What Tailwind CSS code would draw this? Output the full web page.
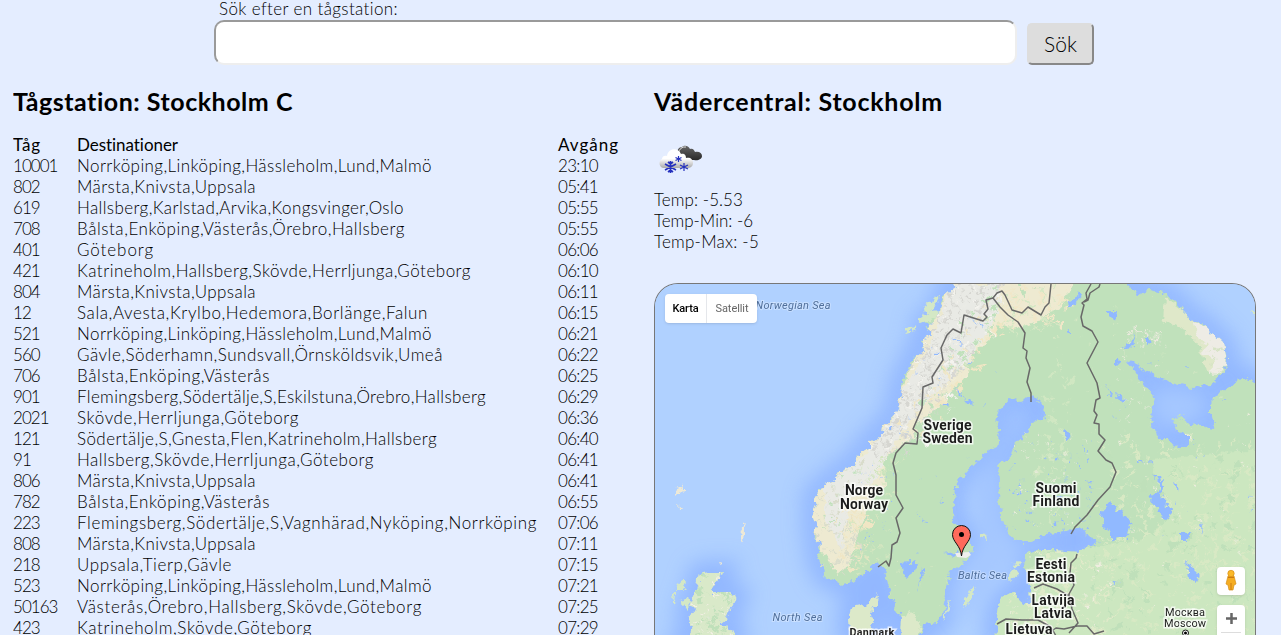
<!DOCTYPE html>
<html lang="sv">
<head>
<meta charset="utf-8">
<title>Tågstation</title>
<script src="https://cdn.jsdelivr.net/npm/@tailwindcss/browser@4"></script>
</head>
<body class="h-[635px] overflow-hidden bg-[#e4edff] font-['Century_Gothic','Lato',sans-serif] text-[17px] font-light leading-[21px] text-black">
<form class="ml-[214px] flex h-[65px] flex-col">
  <label class="h-5 pl-[5px] leading-[17px]"><span data-w="179">Sök efter en tågstation:</span></label>
  <div class="flex gap-[10px]">
    <input class="h-[45px] w-[803px] rounded-[10px] border-2 border-t-[#9a9a9a] border-l-[#9a9a9a] border-r-[#eee] border-b-[#eee] bg-white px-3 text-xl">
    <button type="button" class="mt-[3px] h-[42px] w-[67px] rounded-[5px] border-2 border-t-[#ddd] border-l-[#ddd] border-r-[#888] border-b-[#888] bg-[#ddd] pb-0.5 text-[21px]"><span data-w="33">Sök</span></button>
  </div>
</form>
<main class="flex pl-[13px]">
  <section class="h-[570px] w-[641px] shrink-0 overflow-hidden">
    <h2 class="mt-[22px] h-[30px] text-[25px] font-bold leading-[29px]"><span data-w="280">Tågstation: Stockholm C</span></h2>
    <div class="mt-[17px] grid grid-cols-[64px_481px_80px] auto-rows-[21px] whitespace-nowrap" id="trains">
      <b><span data-w="28">Tåg</span></b><b><span data-w="101">Destinationer</span></b><b><span data-w="61">Avgång</span></b>
    </div>
  </section>
  <section class="w-[602px] shrink-0">
    <h2 class="mt-[22px] h-[30px] text-[25px] font-bold leading-[29px]"><span data-w="289">Vädercentral: Stockholm</span></h2>
    <svg class="mt-[18px] block" width="50" height="50" viewBox="0 0 50 50">
      <defs><linearGradient id="cl" x2="0" y2="1"><stop offset=".5" stop-color="#fff"/><stop offset="1" stop-color="#aaa"/></linearGradient>
      <linearGradient id="dk" x2="0" y2="1"><stop stop-color="#666"/><stop offset="1" stop-color="#292929"/></linearGradient></defs>
      <path d="M25 19c-3-4 0-7 3-7 2-2 6-2 8 2 3-1 4 1 5 3 4-1 7 1 7 4s-4 5-8 4H30z" fill="url(#dk)"/>
      <path d="M24 19q2-8 8-7" fill="none" stroke="#ddd"/>
      <path d="M10 33c-5 0-6-7-2-9 0-3 3-4 5-3 1-8 11-9 14-2 4-1 5 2 5 4 4-1 7 1 7 5 0 4-3 5-6 5z" fill="url(#cl)"/>
      <g stroke="#2530bd"><path stroke-width="1.700" d="M16.500 26v12M11 29l11 6M11 35l11-6M14 27l2.500 2 2.500-2M14 37l2.500-2 2.500 2"/><path stroke-width="1.200" d="M24.500 21v6M21.500 22.500l6 3M21.500 25.500l6-3M30 28v8M26 30l8 4M26 34l8-4"/></g>
    </svg>
    <div class="mt-[4px]"><p><span data-w="89">Temp: -5.53</span></p><p><span data-w="99">Temp-Min: -6</span></p><p><span data-w="105">Temp-Max: -5</span></p></div>
    <div class="relative mt-[31px] h-[352px] w-[602px] overflow-hidden rounded-t-[24px] border border-b-0 border-[#777] bg-[#b0d1ff]">
      <svg class="block" width="600" height="351" viewBox="655 284 600 351" font-family="Roboto, sans-serif">
        <defs>
          <filter id="soft" x="-20%" y="-20%" width="140%" height="140%"><feGaussianBlur stdDeviation="10"/></filter>
          <filter id="rough" filterUnits="userSpaceOnUse" x="640" y="270" width="640" height="380"><feTurbulence type="fractalNoise" baseFrequency=".16" numOctaves="3" seed="4"/><feDisplacementMap in="SourceGraphic" scale="9" xChannelSelector="R" yChannelSelector="G"/></filter>
          <path id="scan" d="M953 280L956 288 942 298 940 312 925 322 931 334 921 341 924 350 913 357 908 370 901 382 904 391 897 400 900 410 892 419 883 426 882 437 870 440 869 449 858 455 853 466 837 473 835 482 820 488 814 498 817 508 813 516 817 526 814 535 820 545 817 558 823 566 824 575 842 584 853 582 864 574 877 562 885 570 888 585 895 605 902 618 901 640H920L922 624 938 623 943 615 947 588 950 572 960 565 970 556 973 547 971 538 962 527 952 522 953 502 957 483 967 472 978 460 988 451 997 447 1000 430 995 421 999 410 1010 398 1020 401 1033 395 1045 407 1043 420 1032 423 1024 436 1014 445 1010 459 998 464 1000 482 998 498 1002 518 1009 535 1023 543 1037 539 1050 533 1066 531 1080 527 1087 535 1100 543 1088 546 1077 552 1052 550 1037 550 1025 556 1024 568 1030 577 1031 604 1024 604 1017 597 1014 591 1003 597 998 606 996 618 997 640H1260V384L1252 381 1240 376 1235 384 1218 394 1210 402 1210 413 1217 424 1210 429 1200 425 1190 424 1182 415 1173 420 1177 430 1188 435 1188 447 1177 447 1168 439 1160 439 1153 426 1151 411 1154 396 1144 385 1136 372 1125 360 1134 361 1140 367 1153 375 1163 380 1180 385 1193 388 1209 384 1218 377 1226 366 1227 358 1223 343 1212 333 1200 322 1190 319 1183 310 1174 300 1163 293 1149 290 1138 296 1127 285V280Z"/>
          <path id="uk" d="M700 574L710 572 722 572 718 580 711 592 730 592 737 596 733 604 727 618 720 624 734 632 735 642H683L692 628 688 616 694 612 690 604 696 590Z"/>
          <path id="dane" d="M849 616Q852 600 866 606L877 592 876 606 870 615 874 622 867 637H850ZM902 617L911 612 921 623 918 640H901Z"/>
          <clipPath id="land"><use href="#scan"/></clipPath><clipPath id="ukc"><use href="#uk"/></clipPath>
        </defs>
        <path d="M655 284h600v351H655z" fill="#b0d1ff"/>
        <g fill="none" stroke="#86adff" stroke-width="24" opacity=".7" filter="url(#soft)"><use href="#scan"/><use href="#uk"/><use href="#dane"/></g>
        <path d="M977 480L1010 425 1030 410 1000 462 999 505 1010 543 1060 540 1020 555 990 590 965 620 955 600 966 560 985 545ZM1150 390L1205 395 1200 420 1160 430Z" fill="#a6c8ff" filter="url(#soft)"/>
        <g filter="url(#rough)">
        <use href="#scan" fill="#c0e1bb"/>
        <g clip-path="url(#land)">
          <path d="M1060 550L1140 540 1170 520 1150 460 1260 450V640H990V590Z" fill="#cce7c0"/>
          <path d="M953 280H1075L1062 306 1035 322 1018 328 1000 325 990 340 975 352 968 375 948 397 935 410 922 420 918 435 902 445 882 460 885 485 872 500 858 535 850 565 838 575 818 545 808 500 858 455 895 405 925 335Z" fill="#eeead1"/>
          <path d="M952 284H1000L1000 310 985 335 970 360 950 380 931 397 917 412 905 430 893 445 874 480 850 500 842 550 825 520 825 485 865 455 893 420 903 390 928 350Z" fill="#e9eae5"/>
          <path d="M1165 297L1183 310 1212 333 1227 358 1213 375 1207 372 1201 350 1185 330 1163 320Z" fill="#dfe8c9"/>
          <path d="M1192 320L1210 330 1224 343 1227 363 1217 375 1209 374 1215 362 1202 352 1208 345 1198 340Z" fill="#eeece5"/>
          <g id="specks"></g>
          <g fill="#91b9ff">
            <path d="M1100 513L1110 502 1118 510 1128 517 1131 527 1127 537 1118 537 1113 542 1107 531ZM1152 475L1161 478 1164 488 1160 493 1166 505 1172 508 1169 519 1161 518 1159 510 1150 500 1153 494 1158 492 1161 484ZM1181 533h8l-1 7h-7zM1186 561l7 7 7 7-4 8-7-6zM1110 580l7 2-4 2zM1199 523l3 4-1 6zM1175 483l4 2-1 6zM1137 460l7 1-5 3zM1068 302l7-4 3-6 4 1-5 10-8 5zM1106 312h10l-2 8zM1115 357l5 5-5 5zM1106 386l7 6-1 5zM1117 393l9 8-7 1zM1063 430l10 6-7 3zM1133 333l1 13-15 2 12-5zM1147 335l5 7-5 3zM1069 330l5 5-8-3z"/>
            <path d="M901 562l8-1 0 5 8-7-2 11-11 8zM922 569l3-1-2 10-5 11zM922 519l6 4-2 1zM969 318l12 6 4 4zM953 339l12 6-6-1zM955 387l10 10-5-1zM965 397l8 8-6-1zM941 401l10 6-8-2zM944 554l15-3-5 5zM975 350l8 10zM957 378l5 6zM948 495l4 2z"/>
          </g>
        </g>
        <use href="#uk" fill="#d9e9c9"/><g clip-path="url(#ukc)" id="ukspecks"></g><use href="#dane" fill="#dce9c9"/>
        <g fill="#eee9d6"><path d="M674 489l8-2 1-3v6l-6 6zM678 504l3 4-2 0zM741 530l4-7 2-1-3 8-1 12-3-7zM720 561l4 4-3 2zM728 632l6-2z"/><path fill="#d4e8c5" d="M677 592l4-10 5-3-1 8-5 5zM672 593l3 0-1 13-1-2zM680 600l8-2 2 8-4 4zM964 601l8-14 3-1-6 16-5 5zM943 621l5-18 3-3-4 15zM1007 577l7-8 6 4-9 8zM1011 563l9-2-3 6zM980 534l6 1 1 4-7-2zM917 319l14-8 9-1-7 9-11 4zM924 307l8-4 4-9 4 2-7 14-8 4zM903 334l5-5 7-4-5 8zM1250 311l5 1v5z"/></g>
        </g>
        <g fill="none" stroke="#686868" stroke-width="1.500" stroke-linejoin="round">
          <path d="M878 567L886 561 889 566 891 558 892 545 897 542 900 533 896 518 903 508 896 495 896 475 893 463 896 453 905 443 917 444 918 433 913 429 922 408 923 387 933 383 932 377 943 360 941 348 947 335 953 329 961 333 964 315 983 321 987 317 984 314 988 309 986 300 993 298 1000 307 1008 315 1018 322 1025 333 1023 348 1027 351 1026 358 1030 368 1027 382 1031 393 1031 402"/>
          <path d="M993 298L997 293 1002 291 1005 295 1012 310 1022 313 1028 307 1041 315 1045 307 1049 303 1051 284M1091 284L1086 293 1087 299 1082 303 1084 305 1081 317 1083 326 1092 331 1098 342 1087 363 1097 383 1100 398 1096 400 1094 411 1097 415 1094 423 1099 424 1099 434 1105 440 1098 451 1106 460 1112 463 1116 472 1110 487 1098 500 1087 515 1075 527 1071 534M1100 284L1099 287 1090 293 1088 300 1084 302"/>
          <path d="M1077 554l-1 4-5 5-1 10 4 12-5 9 3 15 6 14-9 10M1034 588l9-4 14 5 12 7M997 624l9-5 16 1 16 0 13 7 5 9M1050 632l6-4 8 1 13-3 10 0 7 8 10-3"/>
        </g>
        <g text-anchor="middle" font-size="14" font-weight="700" fill="#1d1d1d" stroke="#fff" stroke-opacity=".75" stroke-width="3" paint-order="stroke" lengthAdjust="spacingAndGlyphs">
          <text x="947.500" y="430" textLength="48">Sverige</text><text x="947.500" y="443" textLength="50">Sweden</text>
          <text x="864" y="495" textLength="38">Norge</text><text x="864" y="509" textLength="48">Norway</text>
          <text x="1056" y="493" textLength="41">Suomi</text><text x="1056" y="506" textLength="47">Finland</text>
          <text x="1051" y="569" textLength="31">Eesti</text><text x="1051" y="582" textLength="48">Estonia</text>
          <text x="1053" y="605" textLength="43">Latvija</text><text x="1053" y="618" textLength="38">Latvia</text>
          <text x="1029" y="634" textLength="47">Lietuva</text><text x="872" y="636" font-size="11" textLength="45">Danmark</text>
          <g font-weight="400" font-size="11"><text x="1185" y="616" textLength="40">Москва</text><text x="1185" y="627" textLength="42">Moscow</text></g>
          <g font-weight="400" font-style="italic" font-size="11" fill="#506f9b" stroke-opacity=".3" stroke-width="2"><text x="793" y="309" textLength="75">Norwegian Sea</text><text x="982.500" y="579" textLength="49">Baltic Sea</text><text x="797.500" y="621" textLength="50">North Sea</text></g>
        </g>
        <circle cx="1185.500" cy="633" r="3" fill="#fff" stroke="#111"/><circle cx="1185.500" cy="633" r="1.500"/>
        <path d="M955 553l14-1 2 3-5 3-9-1z" fill="#eee"/>
        <path d="M961.500 556c-1-11-9-14-9-21.500a9 9 0 0 1 18 0c0 7.500-8 10.500-9 21.500z" fill="#ff6a5c" stroke="#111"/><circle cx="961.500" cy="534.500" r="2.500"/>
      </svg>
      <div class="absolute left-[10px] top-[10px] flex h-[29px] w-[92px] rounded-sm bg-white font-[Roboto] text-[11px] leading-[29px] shadow-sm"><div class="w-[42px] border-r border-gray-200 text-center font-medium"><span data-w="26">Karta</span></div><div class="flex-1 text-center font-normal text-[#666]"><span data-w="33">Satellit</span></div></div>
      <div class="absolute left-[562px] top-[283px] h-7 w-7 rounded-sm bg-white shadow-sm"><svg width="28" height="28"><path d="M11 9l-2 8 2 1 1 5h4l1-5 2-1-2-8z" fill="#f5ad22" stroke="#d68e16" stroke-width=".7"/><circle cx="14" cy="6.500" r="3.200" fill="#fbb929" stroke="#d68e16" stroke-width=".7"/><path d="M14 16v7M11 10.500h6" stroke="#cc7a10"/></svg></div>
      <div class="absolute left-[562px] top-[321px] h-[30px] w-7 rounded-t-sm bg-white shadow-sm"><svg width="28" height="30"><path d="M9 13.500h11M14.500 8v11" stroke="#666" stroke-width="2.500"/><path d="M4 27.500h20" stroke="#ddd"/></svg></div>
    </div>
  </section>
</main>
<script>
const rows = [
["10001","Norrköping,Linköping,Hässleholm,Lund,Malmö","23:10",355],["802","Märsta,Knivsta,Uppsala","05:41",179],["619","Hallsberg,Karlstad,Arvika,Kongsvinger,Oslo","05:55",327],["708","Bålsta,Enköping,Västerås,Örebro,Hallsberg","05:55",328],["401","Göteborg","06:06",77],["421","Katrineholm,Hallsberg,Skövde,Herrljunga,Göteborg","06:10",394],["804","Märsta,Knivsta,Uppsala","06:11",179],["12","Sala,Avesta,Krylbo,Hedemora,Borlänge,Falun","06:15",351],["521","Norrköping,Linköping,Hässleholm,Lund,Malmö","06:21",355],["560","Gävle,Söderhamn,Sundsvall,Örnsköldsvik,Umeå","06:22",366],["706","Bålsta,Enköping,Västerås","06:25",193],["901","Flemingsberg,Södertälje,S,Eskilstuna,Örebro,Hallsberg","06:29",409],["2021","Skövde,Herrljunga,Göteborg","06:36",222],["121","Södertälje,S,Gnesta,Flen,Katrineholm,Hallsberg","06:40",360],["91","Hallsberg,Skövde,Herrljunga,Göteborg","06:41",297],["806","Märsta,Knivsta,Uppsala","06:41",179],["782","Bålsta,Enköping,Västerås","06:55",193],["223","Flemingsberg,Södertälje,S,Vagnhärad,Nyköping,Norrköping","07:06",460],["808","Märsta,Knivsta,Uppsala","07:11",179],["218","Uppsala,Tierp,Gävle","07:15",155],["523","Norrköping,Linköping,Hässleholm,Lund,Malmö","07:21",355],["50163","Västerås,Örebro,Hallsberg,Skövde,Göteborg","07:25",345],["423","Katrineholm,Skövde,Göteborg","07:29",235]];
document.getElementById('trains').insertAdjacentHTML('beforeend', rows.map(r =>
`<div><span data-w="${r[0].length*8.9}">${r[0]}</span></div><div><span data-w="${r[3]}">${r[1]}</span></div><div><span data-w="40">${r[2]}</span></div>`).join(''));
function fit() {
  document.querySelectorAll('[data-w]').forEach(e => {
    e.style.letterSpacing = '0.01px';
    e.style.letterSpacing = 0.01 + (e.dataset.w - e.getBoundingClientRect().width) / e.textContent.length + 'px';
  });
}
fit();
addEventListener('load', () => { fit(); requestAnimationFrame(fit); document.fonts.ready.then(fit); });
// Terrain patches: [x, y, width, height, count, size, colour, slope]
let seed = 7; const rnd = () => (seed = seed * 16807 % 2147483647) / 2147483647;
function scatter(list) {
  const by = {};
  for (const [x,y,w,h,n,s,c,k] of list) for (let i = 0; i < n; i++) {
    const v = rnd(), a = x + rnd()*w + (k||0)*v, b = y + v*h, r = () => ((rnd()*2-1)*s).toFixed(1);
    by[c] = (by[c]||'') + `M${a.toFixed(1)} ${b.toFixed(1)}l${r()} ${r()} ${r()} ${r()} ${r()} ${r()}z`;
  }
  return Object.entries(by).map(([c,d]) => `<path fill="${c}" d="${d}"/>`).join('');
}
document.getElementById('specks').innerHTML = scatter([
[955,284,50,170,350,4,'#d6d6d1',-90],[955,284,60,170,110,4,'#f4f3ee',-90],[1000,284,40,150,60,5,'#f0e6c4',-110],[985,284,50,170,90,5,'#c0e1bb',-95],
[815,460,45,110,140,4,'#d9dccb'],[840,490,30,80,40,7,'#f0e6c4'],[860,455,40,120,80,4,'#d4e6c0',-10],[815,460,65,100,50,3,'#c0e1bb'],
[1000,284,65,45,60,6,'#f1e7c8'],[1000,284,65,50,50,4,'#d5e8c4'],[1130,330,30,18,35,3,'#eceadf'],[1210,340,16,35,20,3,'#d6e3c4'],
[1040,370,30,200,60,6,'#d0e7c2'],[1010,430,80,100,60,3,'#e6ecd9'],[1010,440,85,90,90,2.5,'#91b9ff'],[1110,330,60,120,40,2.5,'#e4ebd8'],
[1100,440,155,195,280,6,'#d8e9c4'],[1090,450,165,185,110,7,'#bfe0ba'],[1120,400,135,235,70,2.5,'#edeedd'],[1110,350,140,200,30,2.5,'#91b9ff'],
[1000,555,110,80,120,6,'#e0eac9'],[1000,555,110,80,60,3,'#f0eee0'],[900,350,100,230,35,2,'#91b9ff',10],[888,560,60,75,25,2,'#d8e9c4'],
[905,320,60,120,30,2,'#91b9ff',-30],[855,460,40,90,35,2,'#91b9ff'],[1050,284,200,150,60,2,'#d5e8c4'],[1195,480,40,100,40,7,'#d8e9c4']]);
document.getElementById('ukspecks').innerHTML = scatter([[685,572,55,65,60,6,'#bfe0ba'],[685,572,50,65,55,3,'#f2efe4']]);
</script>
</body>
</html>
